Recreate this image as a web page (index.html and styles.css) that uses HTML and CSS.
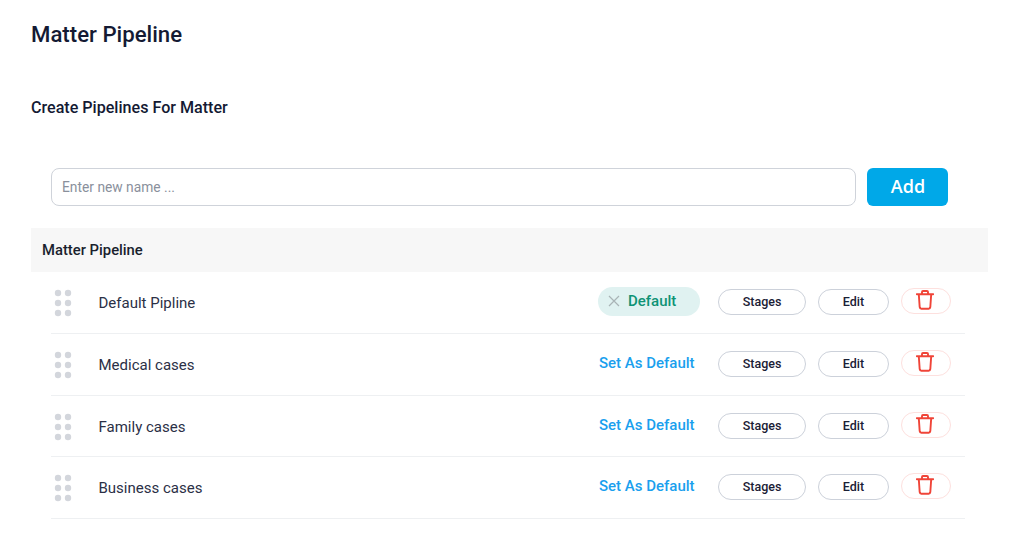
FILE: index.html
```
<!DOCTYPE html>
<html lang="en">
<head>
<meta charset="utf-8">
<title>Matter Pipeline</title>
<link rel="stylesheet" href="styles.css">
</head>
<body>
<svg class="defs" width="0" height="0" aria-hidden="true">
  <symbol id="grip" viewBox="0 0 18 28"><g fill="#d3d6dc"><circle cx="4" cy="4" r="3.2"/><circle cx="14" cy="4" r="3.2"/><circle cx="4" cy="14" r="3.2"/><circle cx="14" cy="14" r="3.2"/><circle cx="4" cy="24" r="3.2"/><circle cx="14" cy="24" r="3.2"/></g></symbol>
  <symbol id="trash" viewBox="0 0 18 20"><path d="M.8 4.2h16.4M6 4.2V2c0-.6.4-1 1-1h4c.6 0 1 .4 1 1v2.2M2.8 4.2l.9 13c.1 .9 .7 1.5 1.6 1.5h7.4c.9 0 1.5-.6 1.6-1.5l.9-13" fill="none" stroke="#f04438" stroke-width="1.9" stroke-linecap="round" stroke-linejoin="round"/></symbol>
</svg>
<main class="page">
  <h1 class="title">Matter Pipeline</h1>
  <h2 class="subtitle">Create Pipelines For Matter</h2>
  <form class="add-form">
    <input class="name-input" type="text" placeholder="Enter new name ...">
    <button class="add-btn" type="button">Add</button>
  </form>
  <div class="table-head">Matter Pipeline</div>
  <ul class="rows">
    <li class="row">
      <svg class="grip"><use href="#grip"/></svg>
      <span class="name">Default Pipline</span>
      <span class="badge"><svg class="x" viewBox="0 0 12 12"><path d="M1 1l10 10M11 1L1 11" stroke="#a9b4b6" stroke-width="1.2" fill="none"/></svg>Default</span>
      <button class="pill stages" type="button">Stages</button>
      <button class="pill edit" type="button">Edit</button>
      <button class="pill del" type="button" aria-label="Delete"><svg class="trash"><use href="#trash"/></svg></button>
    </li>
    <li class="row">
      <svg class="grip"><use href="#grip"/></svg>
      <span class="name">Medical cases</span>
      <a class="set-default">Set As Default</a>
      <button class="pill stages" type="button">Stages</button>
      <button class="pill edit" type="button">Edit</button>
      <button class="pill del" type="button" aria-label="Delete"><svg class="trash"><use href="#trash"/></svg></button>
    </li>
    <li class="row">
      <svg class="grip"><use href="#grip"/></svg>
      <span class="name">Family cases</span>
      <a class="set-default">Set As Default</a>
      <button class="pill stages" type="button">Stages</button>
      <button class="pill edit" type="button">Edit</button>
      <button class="pill del" type="button" aria-label="Delete"><svg class="trash"><use href="#trash"/></svg></button>
    </li>
    <li class="row">
      <svg class="grip"><use href="#grip"/></svg>
      <span class="name">Business cases</span>
      <a class="set-default">Set As Default</a>
      <button class="pill stages" type="button">Stages</button>
      <button class="pill edit" type="button">Edit</button>
      <button class="pill del" type="button" aria-label="Delete"><svg class="trash"><use href="#trash"/></svg></button>
    </li>
  </ul>
</main>
</body>
</html>
```
FILE: styles.css
```
* { box-sizing: border-box; }
html, body { margin: 0; padding: 0; background: #fff; }
body { font-family: Roboto, "Liberation Sans", sans-serif; color: #1a2035; overflow: hidden; }
.defs { position: absolute; }
.page { width: 1009px; height: 560px; padding: 20px 21px 0 31px; }
.title { margin: 0; font-size: 22.2px; line-height: 28px; font-weight: 500; color: #141a33; }
.subtitle { margin: 50px 0 0; font-size: 16.1px; line-height: 20px; font-weight: 500; color: #141a33; }
.add-form { display: flex; gap: 11px; margin: 50px 0 22px 20px; }
.name-input { width: 805px; height: 38px; padding: 0 10px; border: 1px solid #cfd3da; border-radius: 8px; font: 400 13.8px Roboto, sans-serif; color: #1a2035; outline: none; }
.name-input::placeholder { color: #8a909c; opacity: 1; }
.add-btn { width: 81px; height: 38px; border: 0; border-radius: 6px; background: #00a8e8; color: #fff; font: 600 18px "Open Sans", Roboto, sans-serif; padding: 0 0 2px 1px; }
.table-head { height: 44px; padding: 0 11px; background: #f7f7f7; font-size: 14.8px; line-height: 44px; font-weight: 500; color: #1a1f2e; }
.rows { list-style: none; margin: 0 0 0 20px; padding: 0; width: 914px; }
.row { display: flex; align-items: center; height: 61.75px; padding: 1.5px 14px 0 0; border-bottom: 1px solid #eef0f2; }
.grip { width: 18px; height: 28px; margin-left: 3px; flex: none; }
.name { margin-left: 26.5px; font-size: 15px; color: #2b3046; flex: 1; }
.badge { display: flex; align-items: center; width: 102px; height: 29px; margin-top: -4px; padding: 0 0 1px 10px; border-radius: 15px; background: #e0f2f1; color: #0e9375; font-size: 15px; font-weight: 500; }
.x { width: 12px; height: 12px; margin-right: 8px; }
.set-default { width: 102px; margin-top: -4px; padding-left: 1px; font-size: 15px; font-weight: 500; color: #1a9fee; white-space: nowrap; }
.pill { height: 26px; padding: 0 0 1px; margin-top: -2px; border: 1px solid #ccd1da; border-radius: 13px; background: #fff; font: 500 12.5px Roboto, sans-serif; color: #1a2035; }
.stages { width: 88px; margin-left: 18px; }
.edit { width: 71px; margin-left: 12px; }
.del { display: flex; align-items: center; justify-content: center; width: 50px; margin-left: 12px; margin-top: -4px; border-color: #fde0de; }
.trash { width: 18px; height: 20px; margin: -1px 2px 0 0; }
```
